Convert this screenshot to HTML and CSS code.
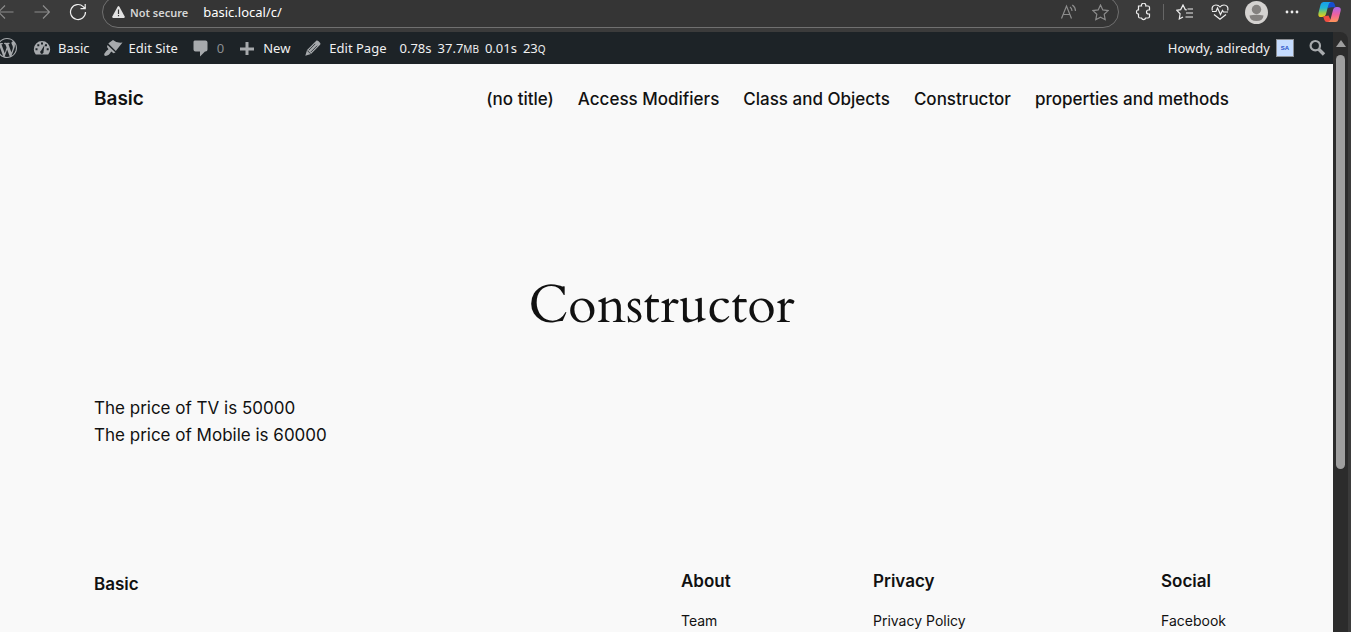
FILE: index.html
```html
<!DOCTYPE html>
<html lang="en">
<head>
<meta charset="utf-8">
<title>Constructor – Basic</title>
<link rel="stylesheet" href="styles.css">
</head>
<body>
<div class="toolbar">
  <button class="tool tool-back" aria-label="Back"><svg width="16" height="16" viewBox="0 0 16 16" class="line dim"><path d="M15.500 8H.5M7 1.500L.5 8l6.500 6.500"/></svg></button>
  <button class="tool tool-forward" aria-label="Forward"><svg width="16" height="16" viewBox="0 0 16 16" class="line dim"><path d="M.5 8h15M9 1.500L15.500 8 9 14.500"/></svg></button>
  <button class="tool tool-reload" aria-label="Reload"><svg width="18" height="18" viewBox="0 0 18 18" class="line"><path d="M16.500 9a7.500 7.500 0 1 1-2.300-5.400L16 5.500M16.200 1v4.700h-4.700"/></svg></button>
  <div class="address">
    <svg width="13" height="12" viewBox="0 0 13 12"><path fill="#e2e2e2" d="M5.600.7q.9-1.300 1.800 0l5.300 9.700q.5 1.300-.8 1.600H1.100Q-.2 11.700.3 10.400z"/><path fill="#353535" d="M5.900 3.500h1.200V8H5.900zM5.900 9h1.200v1.300H5.900z"/></svg>
    <span class="insecure">Not secure</span>
    <input class="url" type="text" value="basic.local/c/" aria-label="Address">
    <button class="tool" aria-label="Read aloud"><svg width="18" height="16" viewBox="0 0 18 16" class="line dim"><path d="M1.500 14.500L6.500 2l5 12.500M3.200 10.500h6.600M10 3q2 1.500 2 4M12.300 1q3.200 2.300 3.200 6"/></svg></button>
    <button class="tool tool-favorite" aria-label="Add to favorites"><svg width="17" height="17" viewBox="0 0 17 17" class="line dim"><path d="M8.500 1l2.300 4.900 5.300.7-3.900 3.700 1 5.400-4.700-2.600-4.700 2.600 1-5.400L.9 6.600l5.300-.7z"/></svg></button>
  </div>
  <div class="actions">
    <button class="tool" aria-label="Extensions"><svg width="16" height="18" viewBox="0 0 16 18" class="line"><path d="M3.500 3h3a2.200 2.200 0 1 1 4.200 0H13q1.500 0 1.500 1.500V7h-1a2 2 0 0 0 0 4h1v2.500Q14.500 15 13 15h-2.300a2.200 2.200 0 0 1-4.200 0H5q-1.500 0-1.500-1.500V11H3a2.200 2.200 0 0 1 0-4.200h.5z"/></svg></button>
    <span class="divider"></span>
    <button class="tool" aria-label="Favorites"><svg width="18" height="17" viewBox="0 0 18 17" class="line"><path d="M10.800 5.800L9.300 5.600 7 1 4.700 5.600.8 6.300l3.300 3.500-.8 5.200L7 13M11.500 5H17M10 9h7M9.500 13H17"/></svg></button>
    <button class="tool" aria-label="Browser essentials"><svg width="18" height="16" viewBox="0 0 18 16" class="line"><path d="M1.400 6.500C.3 3 2.500 1 5 1q2.500 0 4 2 1.500-2 4-2c2.500 0 4.700 2 3.600 5.500M1 7.500h4L6.500 4l3 6.500 2-4 1 1.500H17M3 10.500L9 15.200l6-4.700"/></svg></button>
    <button class="tool tool-profile" aria-label="Profile"><svg width="23" height="23" viewBox="0 0 23 23"><circle cx="11.500" cy="11.500" r="11.500" fill="#d4d2d0"/><circle cx="11.500" cy="8.500" r="4.700" fill="#84817f"/><path fill="#84817f" d="M4.500 14.500q7-1.500 14 0-.5 5.500-7 5.500t-7-5.500z"/></svg></button>
    <button class="tool" aria-label="Settings and more"><svg width="14" height="4" viewBox="0 0 14 4" fill="#eee"><circle cx="2" cy="2" r="1.400"/><circle cx="7" cy="2" r="1.400"/><circle cx="12" cy="2" r="1.400"/></svg></button>
    <button class="tool tool-copilot" aria-label="Copilot"><svg width="23" height="22" viewBox="0 0 23 22">
      <defs>
        <linearGradient id="cool" x1="0" y1="0" x2="0" y2="1"><stop offset="0" stop-color="#159fee"/><stop offset=".4" stop-color="#22b6d4"/><stop offset=".7" stop-color="#8dcc55"/><stop offset="1" stop-color="#f6c916"/></linearGradient>
        <linearGradient id="warm" x1="0" y1="0" x2="0" y2="1"><stop offset="0" stop-color="#a866ee"/><stop offset=".5" stop-color="#ed619f"/><stop offset="1" stop-color="#ff9558"/></linearGradient>
      </defs>
      <path fill="#164ed0" d="M6 1h8q2 0 2.600 2l1 3.200h-4L10 7z"/>
      <path fill="url(#cool)" d="M5.500 1H13q-2 .5-2.600 3L8 13q-.8 3-4 3H3Q-.3 16 .5 12L2.600 3.500Q3.300 1 5.500 1z"/>
      <path fill="#f04e43" d="M5 15.500l5.500-1 3 6.500H9q-2 0-2.600-2l-.7-2z"/>
      <path fill="url(#warm)" d="M18.500 6h1.200q3.800 0 2.900 4l-2.200 8.500Q19.800 21 17.500 21H10q2-.5 2.600-3L15 9q.8-3 3.500-3z"/>
    </svg></button>
  </div>
</div>

<div class="viewport">
  <div class="document">
    <nav class="adminbar" aria-label="Toolbar">
      <a class="admin-item admin-logo" href="#" aria-label="About WordPress"><svg width="20" height="20" viewBox="0 0 20 20" fill="#a7aaad"><path d="M20 10c0-5.510-4.490-10-10-10C4.480 0 0 4.490 0 10c0 5.520 4.480 10 10 10 5.510 0 10-4.480 10-10zM7.780 15.370L4.370 6.220c.55-.02 1.170-.08 1.170-.08.5-.06.44-1.130-.06-1.110 0 0-1.450.11-2.370.11-.18 0-.37 0-.58-.01C4.120 2.690 6.870 1.110 10 1.110c2.330 0 4.450.87 6.050 2.340-.68-.11-1.650.39-1.650 1.580 0 .74.45 1.360.9 2.100.35.61.55 1.360.55 2.460 0 1.490-1.400 5-1.400 5l-3.030-8.370c.54-.02.82-.17.82-.17.5-.05.44-1.250-.06-1.220 0 0-1.440.12-2.380.12-.87 0-2.330-.12-2.330-.12-.5-.03-.56 1.200-.06 1.220l.92.08 1.260 3.410zM17.410 10c.24-.64.74-1.870.43-4.250.7 1.290 1.050 2.710 1.050 4.250 0 3.290-1.730 6.240-4.400 7.780.97-2.590 1.940-5.200 2.920-7.780zM6.100 18.090C3.120 16.650 1.110 13.530 1.110 10c0-1.300.23-2.480.72-3.590C3.250 10.300 4.670 14.200 6.100 18.090zm4.030-6.630l2.580 6.980c-.86.29-1.760.45-2.710.45-.79 0-1.570-.11-2.290-.33.81-2.380 1.620-4.740 2.420-7.100z"/></svg></a>
      <a class="admin-item" href="#"><svg width="20" height="20" viewBox="0 0 20 20"><path fill="#a7aaad" d="M3.800 16.500q-2-2.300-2-5.200a8.200 8.200 0 0 1 16.400 0q0 2.900-2 5.200z"/><path fill="#1d2327" d="M9 4.500h2v2H9zM5.300 6.200h2v2h-2zM13 6.200h2v2h-2zM3.500 10.200h2v2h-2zM14.700 10.200h2v2h-2zM12.500 7l-1 6.600a1.700 1.700 0 1 1-2.300-1z"/></svg>Basic</a>
      <a class="admin-item" href="#"><svg width="20" height="20" viewBox="0 0 20 20"><path fill="#a7aaad" d="M6.500 4.500L10 2q3.500 3.300 9.500 2.500l-6.700 8.500-7.500-7.500zM4.500 7l8 7.500-2 .8-2.300-1.800q-2 4-5.700 4.500-2-.5-1.200-2.200Q2 13.500 5.500 11.300L4 9z"/></svg>Edit Site</a>
      <a class="admin-item admin-comments" href="#"><svg width="20" height="20" viewBox="0 0 20 20"><path fill="#a7aaad" d="M3.500 2.500h11q2 0 2 2v7q0 2-2 2H14L9 18.500v-5H4.500q-2 0-2-2v-8z"/></svg>0</a>
      <a class="admin-item" href="#"><svg width="20" height="20" viewBox="0 0 20 20"><path fill="#a7aaad" d="M8.500 4h3v5.500H17v3h-5.500V17h-3v-4.500H3v-3h5.500z"/></svg>New</a>
      <a class="admin-item" href="#"><svg width="20" height="20" viewBox="0 0 20 20"><path fill="#a7aaad" d="M13.500 2.600q1-.4 1.800.4L17 4.800q1 .9.100 2L8 16l-5.700 1.700L4 12z"/><path stroke="#1d2327" stroke-width=".8" fill="none" d="M5.800 12.300l6.500-6.500M7.700 14.200l6.500-6.500M4.300 12.500l3.300 3.300"/></svg>Edit Page</a>
      <a class="admin-item admin-stats" href="#"><span>0.78s</span><span>37.7<small>MB</small></span><span>0.01s</span><span>23<small>Q</small></span></a>
      <a class="admin-item admin-account" href="#">Howdy, adireddy <span class="avatar">SA</span></a>
      <button class="admin-search" aria-label="Search"><svg width="20" height="20" viewBox="0 0 20 20" fill="none" stroke="#a7aaad"><circle cx="8.300" cy="7.700" r="4.700" stroke-width="2.200"/><path stroke-width="3.400" d="M11.500 11l5.500 5.500"/></svg></button>
    </nav>

    <header class="site-header">
      <a class="site-title" href="#">Basic</a>
      <nav class="site-nav" aria-label="Pages">
        <a href="#">(no title)</a>
        <a href="#">Access Modifiers</a>
        <a href="#">Class and Objects</a>
        <a href="#">Constructor</a>
        <a href="#">properties and methods</a>
      </nav>
    </header>

    <main class="content">
      <h1>Constructor</h1>
      <p>The price of TV is 50000<br>The price of Mobile is 60000</p>
    </main>

    <footer class="site-footer">
      <a class="footer-title" href="#">Basic</a>
      <div><h2>About</h2><a href="#">Team</a></div>
      <div><h2>Privacy</h2><a href="#">Privacy Policy</a></div>
      <div><h2>Social</h2><a href="#">Facebook</a></div>
    </footer>
  </div>
  <div class="scrollbar" aria-hidden="true">
    <span class="scroll-arrow"></span>
    <span class="scroll-thumb"></span>
  </div>
</div>
</body>
</html>
```
FILE: styles.css
```css
* { box-sizing: border-box; }

body {
  margin: 0;
  height: 100vh;
  overflow: hidden;
  display: flex;
  flex-direction: column;
  background: #3b3b3b;
  color: #111;
  font-family: Inter, "Liberation Sans", sans-serif;
}

a { color: inherit; text-decoration: none; }
svg { display: block; flex: none; }

button {
  padding: 0;
  border: 0;
  background: none;
  color: inherit;
}

.toolbar {
  flex: none;
  height: 32px;
  padding-right: 10px;
  display: flex;
  align-items: flex-start;
  overflow: hidden;
  font-family: "Noto Sans", "Open Sans", sans-serif;
}

.tool { height: 24px; display: flex; align-items: center; }
.tool-back { margin-left: -2px; }
.tool-forward { margin-left: 20px; }
.tool-reload { margin: 0 15px 0 19px; }
.line { fill: none; stroke: #eee; stroke-width: 1.2; }
.dim { stroke: #8c8c8c; }

.address {
  flex: 1;
  height: 32px;
  margin-top: -4px;
  padding: 0 9px;
  display: flex;
  align-items: center;
  border: 1px solid #707070;
  border-radius: 16px;
  background: #353535;
}

.insecure {
  margin-left: 5px;
  color: #d6d6d6;
  font-size: 11px;
  font-weight: 600;
}

.url {
  flex: 1;
  min-width: 0;
  margin-left: 15px;
  padding: 0;
  border: 0;
  outline: 0;
  background: none;
  color: #fff;
  font: 13px "Noto Sans", "Open Sans", sans-serif;
}

.tool-favorite { margin-left: 14px; }

.actions { height: 24px; margin-left: 16px; display: flex; align-items: center; gap: 17px; }
.divider { width: 1px; height: 16px; margin: 0 -5px; background: #666; }
.tool-profile { margin-left: -1px; }
.tool-copilot { margin-left: 2px; }

.viewport {
  flex: 1;
  min-height: 0;
  margin-right: 3px;
  display: flex;
  overflow: hidden;
  border-top-right-radius: 8px;
  background: #2c2c2c;
}

.document { flex: 1; min-width: 0; overflow: hidden; background: #f9f9f9; }

.adminbar {
  height: 32px;
  display: flex;
  align-items: center;
  background: #1d2327;
  color: #f0f0f1;
  font: 13px "Noto Sans", "Open Sans", sans-serif;
}

.admin-item { margin-right: 13px; display: flex; align-items: center; gap: 6px; white-space: nowrap; }
.admin-logo { margin-left: -3px; margin-right: 15px; }
.admin-comments { color: #8b8e91; }
.admin-stats small { font-size: 10px; }
.admin-account { margin-left: auto; }

.avatar {
  width: 18px;
  height: 18px;
  border: 1px solid #8c8f94;
  background: #c5dcff;
  color: #2450c8;
  font: bold 6px/16px "Liberation Sans", sans-serif;
  text-align: center;
}

.admin-search { margin-right: 6px; }

.site-header, .content, .site-footer { margin: 0 104px 0 94px; }

.site-header {
  padding-top: 21px;
  display: flex;
  justify-content: space-between;
  align-items: center;
  font-weight: 500;
  line-height: 28px;
}

.site-title { font-size: 19px; font-weight: 600; }
.site-nav { display: flex; gap: 24px; font-size: 17px; }

.content { padding-top: 157px; }

h1 {
  margin: 0;
  font: 400 52px/72px Cardo, "Liberation Serif", serif;
  text-align: center;
}

.content p { margin: 53px 0 0; font-size: 17px; line-height: 27px; }

.site-footer {
  padding-top: 120px;
  display: grid;
  grid-template-columns: 587fr 192fr 288fr 68fr;
  font-size: 14px;
  line-height: 24px;
}

.footer-title { padding-top: 3px; font-size: 17px; font-weight: 600; }
.site-footer h2 { margin: 0 0 16px; font-size: 17px; font-weight: 600; line-height: 24px; }

.scrollbar {
  width: 15px;
  padding-top: 8px;
  display: flex;
  flex-direction: column;
  align-items: center;
}

.scroll-arrow {
  border: 5px solid transparent;
  border-top: 0;
  border-bottom: 7px solid #9f9f9f;
}

.scroll-thumb {
  width: 9px;
  height: 70%;
  margin-top: 8px;
  border-radius: 5px;
  background: #9f9f9f;
}
```
